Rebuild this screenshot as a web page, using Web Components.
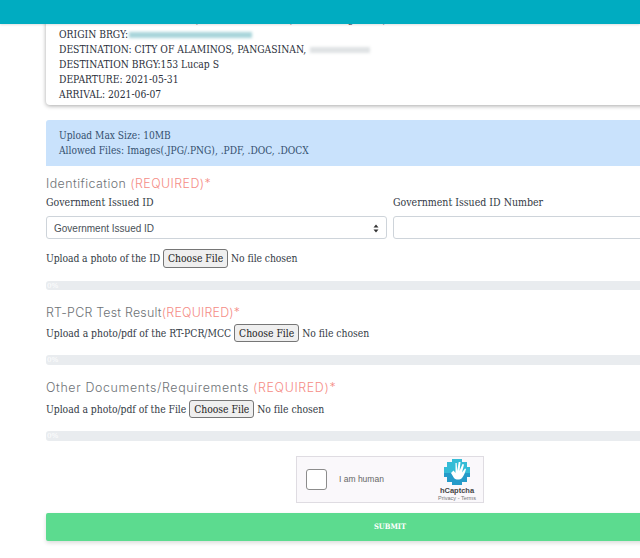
<!DOCTYPE html>
<html><head><meta charset="utf-8">
<style>
html,body{margin:0;padding:0;width:640px;height:558px;overflow:hidden;background:#fff}
body{font:11px/15px "DejaVu Serif Condensed","Liberation Serif",serif;color:#2c3440}
</style></head><body>
<app-page></app-page>
<script>
function def(name,css,html){
  customElements.define(name,class extends HTMLElement{
    constructor(){super();const r=this.attachShadow({mode:'open'});r.innerHTML='<style>'+css+'</style>'+html(this);}
  });
}
const SERIF='"DejaVu Serif Condensed","Liberation Serif",serif';
def('top-bar',':host{display:block;height:24px;background:#00acc1;position:relative;z-index:2;box-shadow:0 1px 2px rgba(0,0,0,.12)}',()=>'');
def('trip-card',`:host{display:block;margin-top:-27px;width:688px;box-sizing:border-box;padding:15px 13px 3px;background:#fff;border-radius:4px;box-shadow:0 1px 4px rgba(0,0,0,.35);font:10.25px/15px ${SERIF};color:#2b303b}
.r{display:block;white-space:nowrap;height:15px}
.s{display:inline-block}
.b1,.b2{display:inline-block;height:6px;filter:blur(1.5px);vertical-align:middle}
.b1{width:123px;background:#a8d5da;margin-left:1px}.b2{width:60px;background:#dfe2e4;margin-left:4px}`,
()=>`<span class="r">ORIGIN:<i class="s" style="width:97px"></i>,<i class="s" style="width:91px"></i>,<i class="s" style="width:55px"></i>g<i class="s" style="width:29px"></i>,</span>
<span class="r">ORIGIN BRGY:<i class="b1"></i></span>
<span class="r">DESTINATION: CITY OF ALAMINOS, PANGASINAN,<i class="b2"></i></span>
<span class="r">DESTINATION BRGY:153 Lucap S</span>
<span class="r">DEPARTURE: 2021-05-31</span>
<span class="r">ARRIVAL: 2021-06-07</span>`);
def('info-box',`:host{display:block;width:688px;height:46px;margin-top:15px;box-sizing:border-box;padding:8px 13px 0;background:#c9e2fc;border-radius:3px 3px 0 0;font:10.15px/15px ${SERIF};color:#34506f;overflow:hidden}`,()=>`<slot></slot>`);
def('section-title',`:host{display:block;font:300 12.4px/15px Inter,"Open Sans",sans-serif;color:#6e7276;letter-spacing:.45px;white-space:nowrap}
span{color:#f58d86}`,()=>`<slot></slot><span><slot name="req"></slot></span>`);
def('file-row',`:host{display:flex;align-items:center;gap:3px;font:10.3px/15px ${SERIF};color:#333a45;white-space:nowrap}
button{font:10.3px/15px ${SERIF};letter-spacing:0;color:#222;height:100%;width:65px;padding:0;border:1px solid #767676;border-radius:3px;background:#efefef;margin:0;box-sizing:border-box}`,
()=>`<slot></slot><button>Choose File</button><span>No file chosen</span>`);
def('progress-bar',`:host{display:block;width:688px;background:#e9ecef;border-radius:3px;color:#fff;font:8px/9px ${SERIF};padding-left:1px;box-sizing:border-box}`,()=>'0%');
def('id-fields',`:host{display:grid;grid-template-columns:341px 341px;column-gap:6px;width:688px;font:10.5px/15px ${SERIF};color:#333a45;margin-top:4px}
.box{height:23px;box-sizing:border-box;border:1px solid #ced4da;border-radius:3px;margin-top:6px;background:#fff}
.sel{display:flex;align-items:center;justify-content:space-between;padding:1px 7px 0;font:10px "Liberation Sans",sans-serif;color:#495057}
svg{display:block}`,
()=>`<div>Government Issued ID</div><div>Government Issued ID Number</div>
<div class="box sel"><span>Government Issued ID</span><svg width="6" height="9" viewBox="0 0 6 9"><path d="M3 0.500 5.500 3.500H.5zM3 8.500 .5 5.500h5z" fill="#333"/></svg></div><div class="box"></div>`);
def('captcha-box',`:host{display:flex;align-items:center;width:188px;height:47px;box-sizing:border-box;border:1px solid #dfdce2;background:#faf8fb;font:8.5px "Liberation Sans",sans-serif;color:#666;margin:15px 0 0 250px;position:relative}
.c{width:21px;height:21px;box-sizing:border-box;border:1px solid #8c8c8c;border-radius:3px;background:#fff;margin-left:9px}
.t{margin-left:12px;flex:1;padding-bottom:2px}
.logo{width:50px;display:flex;flex-direction:column;align-items:center;margin-right:1px}
.h{font:700 7.5px/9px "Liberation Sans",sans-serif;color:#444}.p{font:5.5px/7px "Liberation Sans",sans-serif;color:#777;white-space:nowrap}`,
()=>`<div class="c"></div><div class="t">I am human</div><div class="logo">
<svg width="28" height="28" viewBox="0 0 28 28"><path d="M9 1h10v3h5v5h3v10h-3v5h-5v3H9v-3H4v-5H1V9h3V4h5z" fill="#35bcd6"/><path d="M1 15h26v4h-3v5h-5v3H9v-3H4v-5H1z" fill="#2090c4" opacity=".75"/>
<path d="M8 15l3 5c2 2 6 2 8 0 2-3 3-5 4-9l-1-.5-3 4 2-8-1.500-.5-3 7 1-9-1.800 0-1.500 9-.5-8H12.500l0 10-2-2.500z" fill="#fff"/></svg>
<div class="h">hCaptcha</div><div class="p">Privacy - Terms</div></div>`);
def('submit-bar',`:host{display:block;width:688px;height:28px;margin-top:10px;background:#5cdb8f;border-radius:2px;box-shadow:0 2px 4px rgba(0,0,0,.14);text-align:center;font:700 7.5px/28px ${SERIF};color:#fff}`,()=>'SUBMIT');
def('app-page',`:host{display:block;width:640px;height:558px;overflow:hidden}
.m{margin-left:46px;width:688px}`,
()=>`<top-bar></top-bar><div class="m">
<trip-card></trip-card>
<info-box>Upload Max Size: 10MB<br>Allowed Files: Images(.JPG/.PNG), .PDF, .DOC, .DOCX</info-box>
<section-title style="margin-top:10px">Identification <span slot="req">(REQUIRED)*</span></section-title>
<id-fields></id-fields>
<file-row style="margin-top:10px;height:19px;letter-spacing:-.08px">Upload a photo of the ID</file-row>
<progress-bar style="margin-top:13px;height:9px"></progress-bar>
<section-title style="margin-top:15px;letter-spacing:.23px">RT-PCR Test Result<span slot="req">(REQUIRED)*</span></section-title>
<file-row style="margin-top:4px;height:18px">Upload a photo/pdf of the RT-PCR/MCC</file-row>
<progress-bar style="margin-top:13px;height:10px"></progress-bar>
<section-title style="margin-top:15px;letter-spacing:.65px">Other Documents/Requirements <span slot="req">(REQUIRED)*</span></section-title>
<file-row style="margin-top:5px;height:18px;letter-spacing:-.03px">Upload a photo/pdf of the File</file-row>
<progress-bar style="margin-top:13px;height:10px"></progress-bar>
<captcha-box></captcha-box>
<submit-bar></submit-bar>
</div>`);
</script>
</body></html>
